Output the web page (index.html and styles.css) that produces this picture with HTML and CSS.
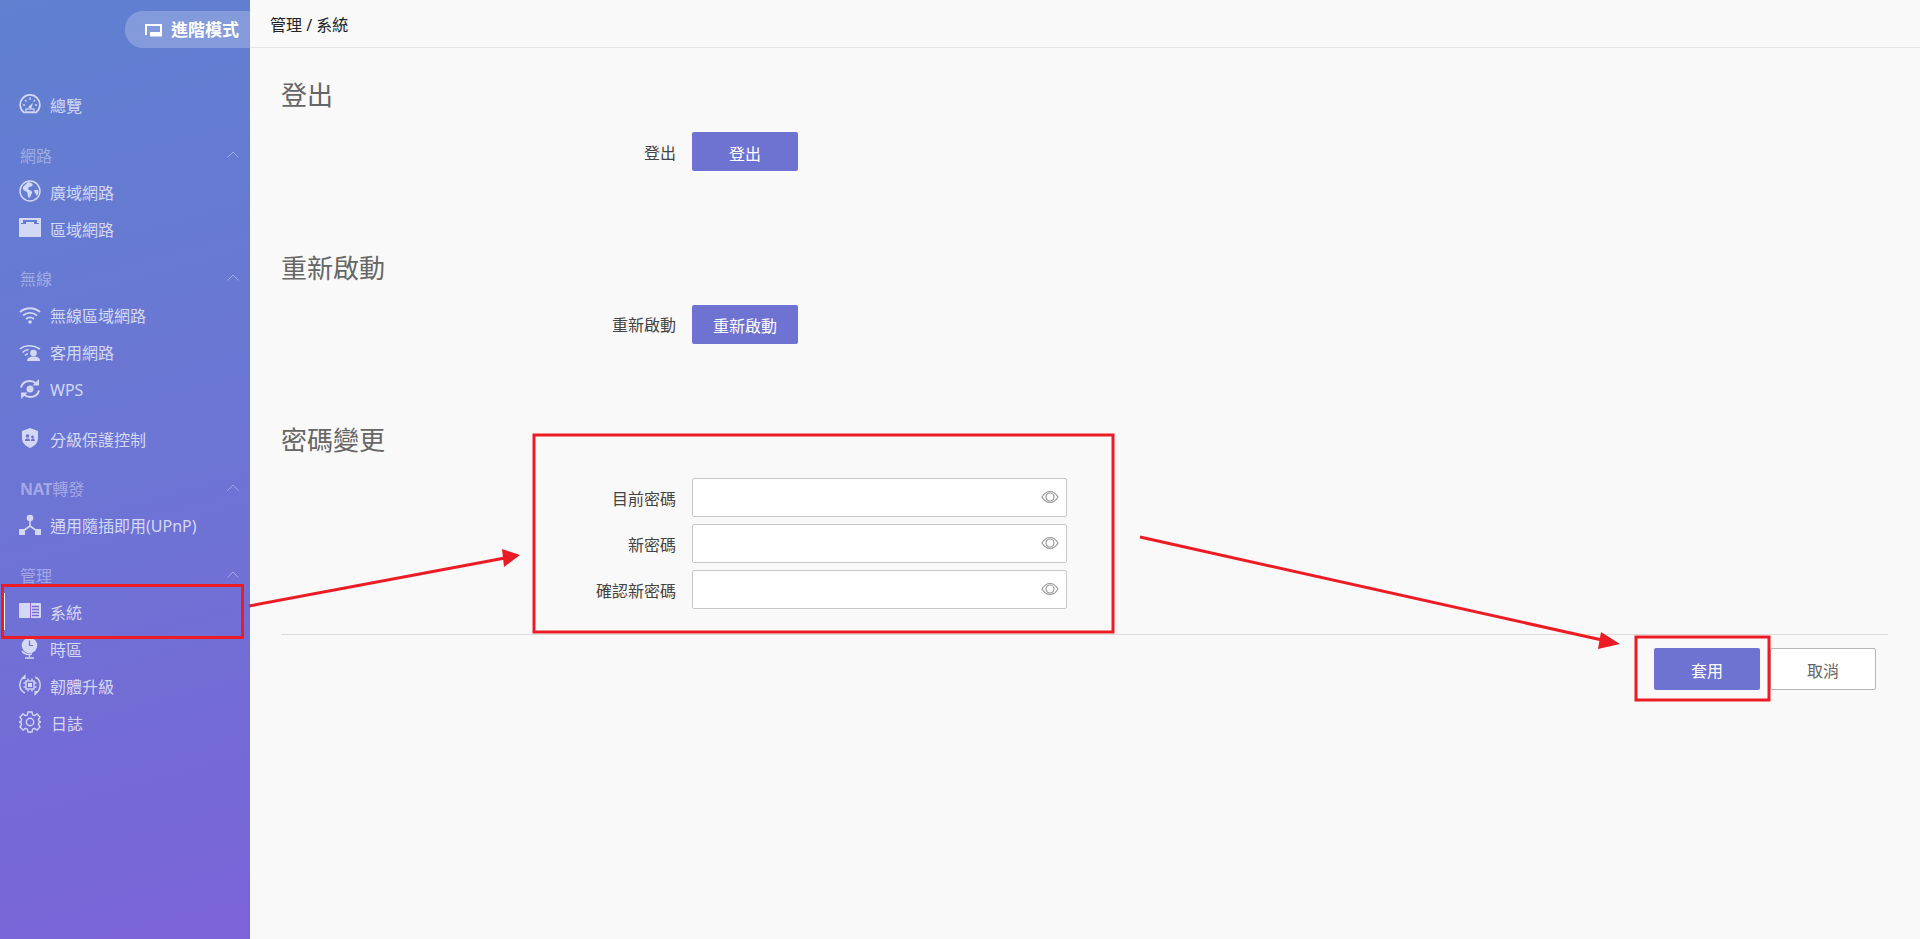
FILE: index.html
```html
<!DOCTYPE html>
<html lang="zh-Hant">
<head>
    <meta charset="UTF-8">
    <title>管理 / 系統</title>
    <link rel="stylesheet" href="styles.css">
</head>
<body>
    <div class="layout">
        <aside class="sidebar">
            <div class="mode-pill">
                <svg class="mode-icon" viewBox="0 0 17 14"><path d="M1 12V2h15v8" fill="none" stroke="#fff" stroke-width="2"/><rect x="5" y="9" width="12" height="4.500" fill="#fff"/></svg>
                <span>進階模式</span>
            </div>
            <nav class="nav">
                <div class="nav-group">
                    <a class="nav-item">
                        <svg class="nav-icon" viewBox="0 0 22 22"><path d="M5 18.500a9.800 9.800 0 1 1 12 0z" fill="none" stroke="currentColor" stroke-width="1.700"/><path d="M11 3.500v2.500M4 11h2M16 11h2M6 6l1.500 1.500M16 6l-1.500 1.500" stroke="currentColor" stroke-width="1.300"/><path d="M9 13l5-4-2 6z" fill="currentColor"/><rect x="7" y="15" width="8" height="3" fill="none" stroke="currentColor" stroke-width="1.200"/></svg>
                        <span>總覽</span>
                    </a>
                </div>
                <div class="nav-group">
                    <div class="nav-head"><span>網路</span><svg class="chevron" viewBox="0 0 12 7"><path d="M.5 6.500 6 1l5.500 5.500"/></svg></div>
                    <a class="nav-item">
                        <svg class="nav-icon" viewBox="0 0 22 22"><circle cx="11" cy="11" r="10" fill="none" stroke="currentColor" stroke-width="1.500"/><path d="M9 2c-1 2-4 3-5 5-1 3 2 4 4 5 1 1 0 4 2 6 2-1 2-4 3-5 1-2-2-3-3-3-1-1-1-2 0-3 2 0 3-1 4-2-1-2-3-3-5-3zM15 10h4c1 2 0 4-1 6-1-2-3-4-3-6z" fill="currentColor"/></svg>
                        <span>廣域網路</span>
                    </a>
                    <a class="nav-item">
                        <svg class="nav-icon" viewBox="0 0 22 22"><path d="M0 1h22v19H0zM4 3v3H2v1h5V5h8v2h5V6h-2V3z" fill="currentColor" fill-rule="evenodd"/></svg>
                        <span>區域網路</span>
                    </a>
                </div>
                <div class="nav-group">
                    <div class="nav-head"><span>無線</span><svg class="chevron" viewBox="0 0 12 7"><path d="M.5 6.500 6 1l5.500 5.500"/></svg></div>
                    <a class="nav-item">
                        <svg class="nav-icon" viewBox="0 0 22 22"><g fill="none" stroke="currentColor" stroke-width="1.800"><path d="M1 8c5.500-5 14.500-5 20 0"/><path d="M4 11.500c4-3.500 10-3.500 14 0"/><path d="M7 15c2.500-2 5.500-2 8 0"/></g><circle cx="11" cy="18" r="1.800" fill="currentColor"/></svg>
                        <span>無線區域網路</span>
                    </a>
                    <a class="nav-item">
                        <svg class="nav-icon" viewBox="0 0 22 22"><g fill="none" stroke="currentColor" stroke-width="1.500"><path d="M1 8c5-4.500 13-4.500 20 0"/><path d="M3.500 11.500c2-2 4-2.800 6-3"/><path d="M6 14.500c1-1 2-1.500 3-1.700"/></g><circle cx="14.500" cy="12" r="3.300" fill="currentColor"/><path d="M8 20c.5-3.500 3-4.500 6.500-4.500S21 16.500 21 20z" fill="currentColor"/></svg>
                        <span>客用網路</span>
                    </a>
                    <a class="nav-item">
                        <svg class="nav-icon" viewBox="0 0 22 22"><g fill="none" stroke="currentColor" stroke-width="2"><path d="M2 9.500C3 5.500 6.500 3 11 3c2.500 0 4.500 1 6 2.500"/><path d="M20 12.500c-1 4-4.500 6.500-9 6.500-2.500 0-4.500-1-6-2.500"/></g><path d="M20 1v6.500h-6.500zM2 21v-6.500h6.500z" fill="currentColor"/><circle cx="11" cy="11" r="3.500" fill="currentColor"/></svg>
                        <span>WPS</span>
                    </a>
                </div>
                <div class="nav-group">
                    <a class="nav-item">
                        <svg class="nav-icon" viewBox="0 0 22 22"><path d="M11 1l8 3v7c0 5-3.500 8-8 10-4.500-2-8-5-8-10V4z" fill="currentColor"/><circle cx="8.500" cy="9" r="1.800" fill="#6f74d4"/><circle cx="13.500" cy="10" r="1.400" fill="#6f74d4"/><path d="M6 14c0-2 1-2.500 2.500-2.500S11 12 11 14zM12 14c0-1.500.5-2.500 1.500-2.500S16 12 16 14z" fill="#6f74d4"/></svg>
                        <span>分級保護控制</span>
                    </a>
                </div>
                <div class="nav-group">
                    <div class="nav-head"><span><b>NAT</b>轉發</span><svg class="chevron" viewBox="0 0 12 7"><path d="M.5 6.500 6 1l5.500 5.500"/></svg></div>
                    <a class="nav-item">
                        <svg class="nav-icon" viewBox="0 0 22 22"><circle cx="11" cy="4" r="3.300" fill="currentColor"/><rect y="15" width="6" height="6" fill="currentColor"/><rect x="16" y="15" width="6" height="6" fill="currentColor"/><path d="M11 6v7M11 12l-7 5M11 12l7 5" fill="none" stroke="currentColor" stroke-width="1.600"/></svg>
                        <span>通用隨插即用(UPnP)</span>
                    </a>
                </div>
                <div class="nav-group">
                    <div class="nav-head"><span>管理</span><svg class="chevron" viewBox="0 0 12 7"><path d="M.5 6.500 6 1l5.500 5.500"/></svg></div>
                    <a class="nav-item active">
                        <svg class="nav-icon" viewBox="0 0 22 22"><rect y="3" width="22" height="15" rx="1" fill="currentColor"/><path d="M11 3h1v15h-1z" fill="#9a62d8"/><path d="M13 6.500h7M13 9.500h7M13 12.500h7M13 15.500h7" stroke="#7a6cd8" stroke-width="1.300"/></svg>
                        <span>系統</span>
                    </a>
                    <a class="nav-item">
                        <svg class="nav-icon" viewBox="0 0 22 22"><circle cx="10.500" cy="8.500" r="7.800" fill="currentColor"/><path d="M10.500 3.500v5h3.500" fill="none" stroke="#7a6cd8" stroke-width="1.200"/><path d="M3 14c2 3 6 4 10 3M10.500 17v3M6 21h9" fill="none" stroke="currentColor" stroke-width="1.500"/></svg>
                        <span>時區</span>
                    </a>
                    <a class="nav-item">
                        <svg class="nav-icon" viewBox="0 0 22 22"><g fill="none" stroke="currentColor" stroke-width="1.400"><path d="M6 2.500C2.500 4.500.8 7.500.8 11c0 3.500 2 6.500 5 8"/><path d="M16 19.500c3.500-2 5.200-5 5.200-8.500 0-3.500-2-6.500-5-8"/><rect x="7" y="7" width="8" height="8"/><path d="M9 4.500v2M13 4.500v2M9 15.500v2M13 15.500v2M4.500 9h2M4.500 13h2M15.500 9h2M15.500 13h2"/></g><rect x="9" y="9" width="4" height="4" fill="currentColor"/><path d="M6.500 0v5H2zM15.500 22v-5H20z" fill="currentColor"/></svg>
                        <span>韌體升級</span>
                    </a>
                    <a class="nav-item">
                        <svg class="nav-icon" viewBox="0 0 22 22"><g fill="none" stroke="currentColor" stroke-width="1.400"><path d="M9 1h4l.6 2.800 1.900.8L18 3l3 3-1.600 2.500.8 1.900L22 11l-1.800.6-.8 1.900L21 16l-3 3-2.500-1.600-1.900.8L13 21H9l-.6-2.800-1.900-.8L4 19l-3-3 1.600-2.500-.8-1.900L0 11l1.800-.6.800-1.900L1 6l3-3 2.500 1.600 1.900-.8z"/><circle cx="11" cy="11" r="3.700"/></g></svg>
                        <span class="nav-log">日誌</span>
                    </a>
                </div>
            </nav>
        </aside>

        <main class="main">
            <header class="topbar">管理 / 系統</header>
            <div class="content">
                <section class="section">
                    <h2>登出</h2>
                    <div class="form-row">
                        <label>登出</label>
                        <button class="btn btn-primary">登出</button>
                    </div>
                </section>
                <section class="section">
                    <h2>重新啟動</h2>
                    <div class="form-row">
                        <label>重新啟動</label>
                        <button class="btn btn-primary">重新啟動</button>
                    </div>
                </section>
                <section class="section section-last">
                    <h2>密碼變更</h2>
                    <div class="form-row">
                        <label>目前密碼</label>
                        <div class="password">
                            <input type="password">
                            <svg class="eye" viewBox="0 0 18 14"><path d="M1 7c2-3.500 5-5.500 8-5.500S15 3.500 17 7c-2 3.500-5 5.500-8 5.500S3 10.500 1 7z"/><circle cx="9" cy="7" r="4"/></svg>
                        </div>
                    </div>
                    <div class="form-row">
                        <label>新密碼</label>
                        <div class="password">
                            <input type="password">
                            <svg class="eye" viewBox="0 0 18 14"><path d="M1 7c2-3.500 5-5.500 8-5.500S15 3.500 17 7c-2 3.500-5 5.500-8 5.500S3 10.500 1 7z"/><circle cx="9" cy="7" r="4"/></svg>
                        </div>
                    </div>
                    <div class="form-row">
                        <label>確認新密碼</label>
                        <div class="password">
                            <input type="password">
                            <svg class="eye" viewBox="0 0 18 14"><path d="M1 7c2-3.500 5-5.500 8-5.500S15 3.500 17 7c-2 3.500-5 5.500-8 5.500S3 10.500 1 7z"/><circle cx="9" cy="7" r="4"/></svg>
                        </div>
                    </div>
                </section>
                <div class="footer">
                    <button class="btn btn-primary btn-large">套用</button>
                    <button class="btn btn-cancel btn-large">取消</button>
                </div>
            </div>
        </main>
    </div>

    <!-- 標註 -->
    <svg class="marks" viewBox="0 0 1920 939">
        <g fill="none" stroke="#ed1c24" stroke-width="3">
            <rect x="2.500" y="585.500" width="240" height="52"/>
            <rect x="534" y="435" width="579" height="197"/>
            <rect x="1636" y="637" width="133" height="63"/>
            <path d="M249 606 505 558"/>
            <path d="M1140 537 1602 640"/>
        </g>
        <path d="M520 555 502 549 504 567zM1620 644 1601 632 1598 649z" fill="#ed1c24"/>
    </svg>
</body>
</html>
```

FILE: styles.css
```css
* { box-sizing: border-box; }
body { margin: 0; height: 939px; overflow: hidden; background-color: #f9f9f9; font-family: "Noto Sans", "Noto Sans CJK TC", sans-serif; font-size: 16px; color: #444; }

.layout { display: flex; height: 939px; }

.sidebar { width: 250px; flex-shrink: 0; padding-top: 11px; background: linear-gradient(165deg, #6080d0 0%, #6c75d4 50%, #7b63d8 100%); color: #d3d8f4; }
.mode-pill { display: flex; align-items: center; gap: 9px; width: 125px; height: 37px; margin-left: 125px; padding-left: 20px; border-radius: 18px 0 0 18px; background-color: rgba(255,255,255,0.22); color: #fff; font-size: 17px; font-weight: 700; line-height: 39px; }
.mode-icon { width: 17px; height: 14px; }

.nav { margin-top: 38px; }
.nav-group { margin-top: 12.500px; }
.nav-group:first-child { margin-top: 0; }
.nav-head { display: flex; justify-content: space-between; align-items: center; height: 37px; padding: 0 11px 0 20px; color: rgba(255,255,255,0.38); line-height: 37px; }
.nav-head span { position: relative; top: 2px; }
.nav-head b { font-weight: 700; }
.chevron { width: 12px; height: 7px; fill: none; stroke: rgba(255,255,255,0.38); stroke-width: 1; }
.nav-item { display: flex; align-items: center; gap: 9px; position: relative; height: 37px; padding-left: 19px; line-height: 37px; }
.nav-item span { position: relative; top: 2px; }
.nav-item.active::before { content: ""; position: absolute; left: 4px; top: 0; width: 1px; height: 37px; background-color: #fff; }
.nav-icon { width: 22px; height: 22px; flex-shrink: 0; }
.nav-log { margin-left: 1px; }

.main { flex: 1; min-width: 0; }
.topbar { height: 48px; padding: 0 20px; border-bottom: 1px solid #e6e6e6; color: #222; line-height: 50px; }
.content { padding: 29px 32px 0 31px; }

.section { height: 172.500px; }
.section-last { height: auto; padding-bottom: 25px; border-bottom: 1px solid #dcdcdc; }
h2 { margin: 0 0 19px; color: #666; font-size: 26px; font-weight: 400; line-height: 36px; }
.section-last h2 { margin-bottom: 20px; }

.form-row { display: flex; align-items: center; gap: 16px; margin-bottom: 7px; }
.form-row:last-child { margin-bottom: 0; }
.form-row label { width: 395px; padding-top: 0; text-align: right; color: #444; }

.btn { width: 106px; height: 39px; padding: 2px 0 0; border-radius: 2px; font-family: inherit; font-size: 16px; }
.btn-primary { border: none; background-color: #6e72d1; color: #fff; }
.btn-cancel { border: 1px solid #b5b5b5; background-color: #fff; color: #666; }
.btn-large { height: 42px; }

.password { position: relative; width: 375px; height: 39px; }
.password input { display: block; width: 100%; height: 100%; border: 1px solid #c8c8c8; border-radius: 2px; background-color: #fff; }
.eye { position: absolute; right: 8px; top: 12px; width: 18px; height: 14px; fill: none; stroke: #999; stroke-width: 1.200; }

.footer { display: flex; justify-content: flex-end; gap: 10px; padding: 13px 12px 0 0; }

.marks { position: absolute; left: 0; top: 0; width: 1920px; height: 939px; pointer-events: none; }
```
